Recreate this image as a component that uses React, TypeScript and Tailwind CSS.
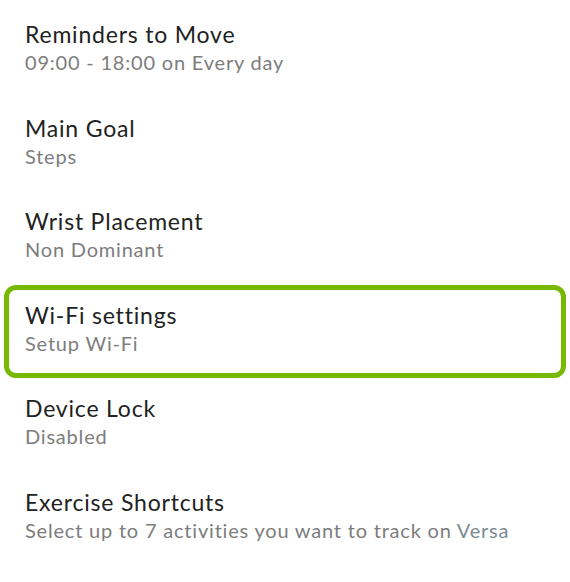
const items = [
  { title: "Reminders to Move", sub: "09:00 - 18:00 on Every day" },
  { title: "Main Goal", sub: "Steps" },
  { title: "Wrist Placement", sub: "Non Dominant" },
  { title: "Wi-Fi settings", sub: "Setup Wi-Fi", active: true },
  { title: "Device Lock", sub: "Disabled" },
  { title: "Exercise Shortcuts", sub: "Select up to 7 activities you want to track on", device: "Versa" },
];

export default function App() {
  return (
    <div className="h-[582px] w-[570px] overflow-hidden bg-white pt-1 font-['Lato','Open_Sans',sans-serif]">
      <ul className="px-1">
        {items.map((item) => (
          <li
            key={item.title}
            className={
              item.active
                ? "h-[93.5px] rounded-xl border-[5px] border-[#76b900] pl-4 pt-[11px]"
                : "h-[93.5px] rounded-xl border-[5px] border-transparent pl-4 pt-[11px]"
            }
          >
            <p className="text-[23px] leading-[28px] tracking-[0.8px] text-[#222222]">{item.title}</p>
            <p className="text-[20px] leading-[28px] tracking-[0.8px] text-[#7d7d7d]">
              {item.sub}
              {item.device && <span className="text-[#7c8a93]"> {item.device}</span>}
            </p>
          </li>
        ))}
      </ul>
    </div>
  );
}
